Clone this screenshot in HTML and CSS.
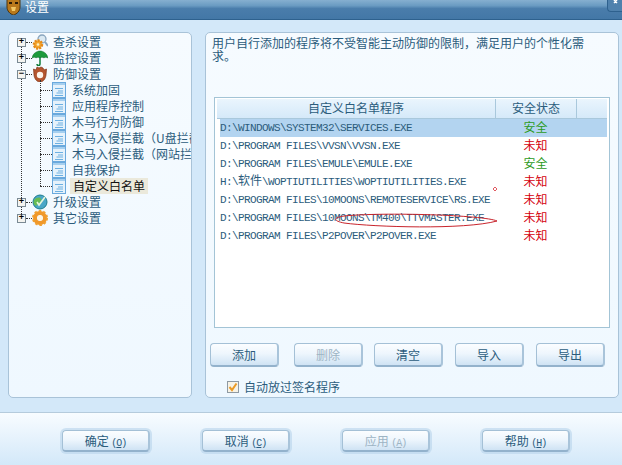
FILE: index.html
```html
<!DOCTYPE html>
<html lang="zh-CN">

<head>
    <meta charset="utf-8" />
    <title>设置</title>
    <link rel="stylesheet" href="styles.css">
</head>

<body>
    <svg class="defs" width="0" height="0">
        <symbol id="doc" viewBox="0 0 14 16">
            <rect x=".5" y=".5" width="13" height="15" fill="#e6f2fb" stroke="#6aa9dd" />
            <rect x="1" y="1" width="12" height="2" fill="#a5cfef" />
            <path d="M3 6.500h8M6 9h5M4.500 11h6.500M3 13.500h8" stroke="#6cb0e2" fill="none" />
        </symbol>
    </svg>
    <div class="window">
        <header class="titlebar">
            <svg class="title_icon" width="15" height="20" viewBox="0 0 15 20">
                <path d="M1 3l3 1h7l3-1v9c0 4-3 7-6.500 8C4 19 1 16 1 12z" fill="#b9791c" stroke="#4a3510" />
                <path d="M3 7h3v2H3zM9 7h3v2H9z" fill="#2c1c06" />
                <path d="M5 12h5l-1 4H6z" fill="#f1c764" />
            </svg>
            <span class="title_text">设置</span>
            <div class="close_btn">
                <svg width="14" height="11" viewBox="0 0 14 11">
                    <path d="M5 5l3-3M8 5L5 2" stroke="#fff" stroke-width="1.500" transform="translate(1 -2)" />
                </svg>
            </div>
        </header>
        <main class="content">
            <nav class="panel side">
                <ul class="tree">
                    <li class="node">
                        <i class="box">+</i>
                        <svg class="node_icon" viewBox="0 0 16 16">
                            <circle cx="10" cy="5" r="4" fill="#dbe9f2" stroke="#8aa6bf" stroke-width="1.300" />
                            <path d="M13 8l3 4" stroke="#8aa6bf" stroke-width="2" />
                            <circle cx="6" cy="10.500" r="4" fill="#f4a62e" stroke="#e58a18" stroke-width="2.500" stroke-dasharray="2 1" />
                            <circle cx="6" cy="10.500" r="1.300" fill="#fff1c4" />
                        </svg>
                        <span class="label">查杀设置</span>
                    </li>
                    <li class="node">
                        <i class="box">+</i>
                        <svg class="node_icon" viewBox="0 0 16 16">
                            <path d="M0 8C1 3 5 1 8 1s7 2 8 7c-2-1-3-1-4 0-1-1-3-1-4 0-1-1-3-1-4 0-1-1-2-1-4 0z" fill="#1c9a3c" stroke="#0f6b2a" stroke-width=".5" />
                            <path d="M8 7v7c0 2-3 2-3 0" fill="none" stroke="#0f7d3a" stroke-width="1.500" />
                        </svg>
                        <span class="label">监控设置</span>
                    </li>
                    <li class="node">
                        <i class="box">−</i>
                        <svg class="node_icon" viewBox="0 0 16 16">
                            <path d="M1.500 3l2.500 1L5 1l2 1 2-1 2 1 1 2 2.500-1L14 9c-.5 4-3 7-6 7s-5.500-3-6-7z" fill="#b4552f" stroke="#7f3518" stroke-width=".7" />
                            <circle cx="8" cy="9" r="3.200" fill="#fdf3ea" />
                        </svg>
                        <span class="label">防御设置</span>
                    </li>
                    <li>
                        <ul class="subtree">
                            <li class="leaf"><svg class="leaf_icon"><use href="#doc" /></svg><span class="label">系统加固</span></li>
                            <li class="leaf"><svg class="leaf_icon"><use href="#doc" /></svg><span class="label">应用程序控制</span></li>
                            <li class="leaf"><svg class="leaf_icon"><use href="#doc" /></svg><span class="label">木马行为防御</span></li>
                            <li class="leaf"><svg class="leaf_icon"><use href="#doc" /></svg><span class="label">木马入侵拦截（U盘拦截）</span></li>
                            <li class="leaf"><svg class="leaf_icon"><use href="#doc" /></svg><span class="label">木马入侵拦截（网站拦截）</span></li>
                            <li class="leaf"><svg class="leaf_icon"><use href="#doc" /></svg><span class="label">自我保护</span></li>
                            <li class="leaf"><svg class="leaf_icon"><use href="#doc" /></svg><span class="label on">自定义白名单</span></li>
                        </ul>
                    </li>
                    <li class="node">
                        <i class="box">+</i>
                        <svg class="node_icon" viewBox="0 0 16 16">
                            <circle cx="8" cy="8" r="7" fill="#4aa6c8" stroke="#1d7d8c" />
                            <path d="M2 6c3-3 6-3 7-1s-3 5-5 7c-2-1-3-3-2-6z" fill="#68bc52" />
                            <path d="M5 8l2 3 6-8" fill="none" stroke="#e6f6d8" stroke-width="1.600" />
                        </svg>
                        <span class="label">升级设置</span>
                    </li>
                    <li class="node">
                        <i class="box">+</i>
                        <svg class="node_icon" viewBox="0 0 16 16">
                            <circle cx="8" cy="8" r="5" fill="none" stroke="#f0982a" stroke-width="4" />
                            <circle cx="8" cy="8" r="7" fill="none" stroke="#f0a030" stroke-width="2" stroke-dasharray="2.500 2" />
                            <circle cx="8" cy="8" r="2.500" fill="#fff6e2" />
                        </svg>
                        <span class="label">其它设置</span>
                    </li>
                </ul>
            </nav>
            <section class="panel detail">
                <p class="desc">用户自行添加的程序将不受智能主动防御的限制，满足用户的个性化需求。</p>
                <div class="list">
                    <div class="list_head">
                        <span class="col_name">自定义白名单程序</span>
                        <span class="col_state">安全状态</span>
                        <span class="col_rest"></span>
                    </div>
                    <div class="row sel"><span class="path">D:\WINDOWS\SYSTEM32\SERVICES.EXE</span><span class="safe">安全</span></div>
                    <div class="row"><span class="path">D:\PROGRAM FILES\VVSN\VVSN.EXE</span><span class="unknown">未知</span></div>
                    <div class="row"><span class="path">D:\PROGRAM FILES\EMULE\EMULE.EXE</span><span class="safe">安全</span></div>
                    <div class="row"><span class="path">H:\<b>软件</b>\WOPTIUTILITIES\WOPTIUTILITIES.EXE</span><span class="unknown">未知</span></div>
                    <div class="row"><span class="path">D:\PROGRAM FILES\10MOONS\REMOTESERVICE\RS.EXE</span><span class="unknown">未知</span></div>
                    <div class="row"><span class="path">D:\PROGRAM FILES\10MOONS\TM400\TTVMASTER.EXE</span><span class="unknown">未知</span></div>
                    <div class="row"><span class="path">D:\PROGRAM FILES\P2POVER\P2POVER.EXE</span><span class="unknown">未知</span></div>
                    <!-- 截图上手画的红圈 -->
                    <svg class="scribble" width="396" height="231" viewBox="0 0 396 231">
                        <path d="M283 124C270 118 170 115 130 119C118 121 120 124 130 126C160 130 250 133 283 124" fill="none" stroke="#c8242c" />
                        <path d="M281 90l2 2-2 2-2-2z" fill="none" stroke="#d8303a" stroke-width=".8" />
                    </svg>
                </div>
                <div class="actions">
                    <button class="btn first">添加</button>
                    <button class="btn off">删除</button>
                    <button class="btn">清空</button>
                    <button class="btn">导入</button>
                    <button class="btn">导出</button>
                </div>
                <label class="check">
                    <svg width="12" height="12" viewBox="0 0 12 12">
                        <rect x=".5" y=".5" width="11" height="11" fill="#f7f3e6" stroke="#8f9aa3" />
                        <path d="M2.500 6l2.500 3 4.500-6.500" fill="none" stroke="#eb9a25" stroke-width="2" />
                    </svg>
                    <span>自动放过签名程序</span>
                </label>
            </section>
        </main>
        <footer class="footer">
            <button class="btn wide">确定 <em><u>O</u></em></button>
            <button class="btn wide">取消 <em><u>C</u></em></button>
            <button class="btn wide off">应用 <em><u>A</u></em></button>
            <button class="btn wide">帮助 <em><u>H</u></em></button>
        </footer>
    </div>
</body>

</html>
```

FILE: styles.css
```css
* {
    box-sizing: border-box;
}

html,
body {
    padding: 0;
    margin: 0;
    width: 100%;
    height: 100%;
    overflow: hidden;
}

body {
    font-family: "Noto Sans CJK SC", "Liberation Sans", sans-serif;
    font-size: 12px;
    color: #2b5c7c;
}

ul {
    list-style: none;
    margin: 0;
    padding: 0;
}

.defs {
    position: absolute;
}

.window {
    width: 622px;
    height: 465px;
    display: flex;
    flex-direction: column;
    background-color: #d3e8f9;
}

.titlebar {
    height: 20px;
    display: flex;
    align-items: flex-start;
    padding-left: 6px;
    overflow: hidden;
    color: #fff;
    background: linear-gradient(#86afd0, #6a9bc2 30%, #4a7dab 45%, #4377a6);
    border-bottom: 1px solid #2e618e;
}

.title_icon {
    margin-top: -5px;
    flex: none;
}

.title_text {
    margin-left: 4px;
    line-height: 14px;
    flex: 1;
}

.close_btn {
    width: 15px;
    height: 12px;
    background-color: #4f81ad;
    border: 1px solid #2e618e;
    border-top: none;
    border-right: none;
    border-bottom-left-radius: 4px;
}

.close_btn svg {
    display: block;
}

.content {
    height: 392px;
    display: flex;
    gap: 13px;
    padding: 12px 3px 14px 8px;
}

.panel {
    background: linear-gradient(#f6fbff, #eff8ff);
    border: 1px solid #a9c3d8;
    border-radius: 5px;
    overflow: hidden;
}

.side {
    width: 184px;
    flex: none;
    padding: 1px 0 0 8px;
}

.detail {
    flex: 1;
    padding: 3px 0 0 6px;
}

/* 左边的树 */
.tree {
    position: relative;
}

.tree::before {
    content: "";
    position: absolute;
    left: 4px;
    top: 12px;
    height: 172px;
    border-left: 1px dotted #333;
}

.node,
.leaf {
    height: 16px;
    display: flex;
    align-items: center;
    white-space: nowrap;
    position: relative;
}

.box {
    width: 9px;
    height: 9px;
    flex: none;
    position: relative;
    z-index: 1;
    background-color: #f4f4f0;
    border: 1px solid #7a8a94;
    color: #000;
    font: bold 9px/7px "Liberation Mono", monospace;
    text-align: center;
}

.node_icon {
    width: 16px;
    height: 16px;
    flex: none;
    margin-left: 6px;
}

.node::after {
    content: "";
    position: absolute;
    left: 9px;
    top: 8px;
    width: 6px;
    border-top: 1px dotted #333;
}

.label {
    margin-left: 2px;
    padding: 0 3px;
    line-height: 16px;
}

.subtree {
    position: relative;
    padding-left: 35px;
}

.subtree::before {
    content: "";
    position: absolute;
    left: 23px;
    top: -2px;
    height: 106px;
    border-left: 1px dotted #333;
}

.leaf::before {
    content: "";
    position: absolute;
    left: -12px;
    top: 8px;
    width: 12px;
    border-top: 1px dotted #333;
}

.leaf_icon {
    width: 14px;
    height: 16px;
    flex: none;
}

.leaf .label {
    margin-left: 4px;
    padding: 0 2px;
}

.leaf .on {
    padding: 0 3px;
    background-color: #ebe9db;
    color: #111;
}

/* 右边的内容 */
.desc {
    margin: 0;
    width: 378px;
    line-height: 13px;
    height: 26px;
}

.list {
    position: relative;
    width: 396px;
    height: 231px;
    margin: 35px 0 0 2px;
    padding: 1px 2px 0;
    background-color: #fff;
    border: 1px solid #a3c4d6;
}

.list_head {
    height: 20px;
    display: grid;
    grid-template-columns: 278px 81px 1fr;
    background: linear-gradient(#eaf5fd, #d5e9f9);
    border-bottom: 1px solid #a9c8dc;
    line-height: 18px;
    text-align: center;
}

.col_state,
.col_rest {
    border-left: 1px solid #a9c8dc;
}

.row {
    height: 18px;
    margin-left: 3px;
    display: grid;
    grid-template-columns: 275px 81px;
    line-height: 16px;
}

.row.sel {
    background-color: #b3d4f0;
}

.path {
    font-family: "Liberation Mono", monospace;
    font-size: 11px;
    line-height: 18px;
    letter-spacing: -.6px;
    white-space: nowrap;
}

.path b {
    font-family: "Noto Sans CJK SC", sans-serif;
    font-size: 12px;
    line-height: 0;
    font-weight: normal;
    letter-spacing: 0;
}

.safe,
.unknown {
    text-align: center;
}

.safe {
    color: #2c9a1c;
}

.unknown {
    color: #d4000c;
}

.scribble {
    position: absolute;
    left: -1px;
    top: -1px;
}

.actions {
    display: flex;
    gap: 12px;
    margin: 15px 0 0 -2px;
}

.btn {
    width: 69px;
    height: 24px;
    padding: 0;
    font: 12px "Noto Sans CJK SC", sans-serif;
    color: #2b5c7c;
    background: linear-gradient(#fbfdff, #eef6fd 45%, #cfe3f4);
    border: 1px solid #a4c0d6;
    border-bottom: 2px solid #93b2cc;
    border-right: 2px solid #a9c4da;
    border-radius: 4px;
}

.btn.first {
    margin-right: 3px;
}

.btn.off {
    color: #9db4c4;
    margin-right: -1px;
}

.btn em {
    font: 10px "Liberation Mono", monospace;
    letter-spacing: -1px;
}

.btn em::before {
    content: "(";
}

.btn em::after {
    content: ")";
}

.check {
    display: flex;
    align-items: center;
    gap: 5px;
    margin: 13px 0 0 15px;
    line-height: 13px;
}

.footer {
    flex: 1;
    display: flex;
    gap: 52px;
    padding: 17px 0 0 62px;
    background: linear-gradient(#f8fcff, #d3e8f9);
    border-top: 1px solid #b5cbdc;
}

.btn.wide {
    width: 88px;
    height: 22px;
    margin: 0;
    padding-bottom: 1px;
    box-shadow: 0 0 0 2px rgba(184, 212, 235, .6);
}
```
